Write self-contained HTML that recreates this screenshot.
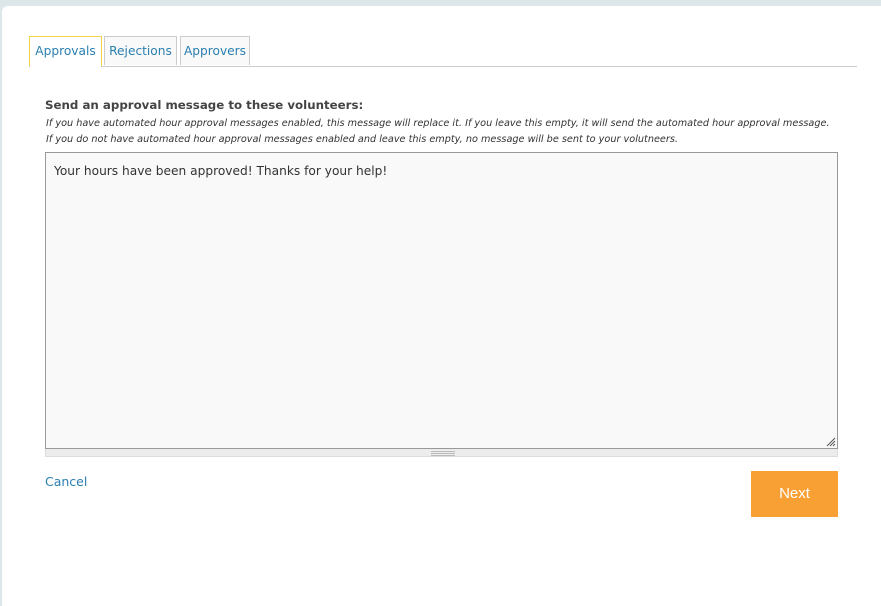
<!DOCTYPE html>
<html><head><style>
html,body{margin:0;padding:0;width:881px;height:573px;overflow:hidden;background:#dde7ea;}
.panel{position:absolute;left:2px;top:6px;width:900px;height:600px;background:#fff;border-radius:6px 0 0 0;}
.tab{position:absolute;top:36px;height:29px;border:1px solid #ccc;border-bottom:none;background:#f9f9f9;color:#2a7fb0;font:12.2px "DejaVu Sans",sans-serif;line-height:29px;text-align:center;box-sizing:border-box;}
.line{position:absolute;left:29px;top:66px;width:828px;height:1px;background:#ccc;}
h{position:absolute;left:45px;top:98px;font:bold 11.8px "DejaVu Sans",sans-serif;color:#444;white-space:nowrap;}
.it{position:absolute;left:46px;font:italic 9.7px "DejaVu Sans",sans-serif;color:#333;white-space:nowrap;}
.ta{position:absolute;left:45px;top:152px;width:793px;height:297px;box-sizing:border-box;border:1px solid #999;background:#f9f9f9;font:12.2px "DejaVu Sans",sans-serif;color:#333;padding:11px 8px;}
.grip{position:absolute;left:45px;top:449px;width:793px;height:8px;background:#ececec;border:1px solid #ddd;border-top:none;box-sizing:border-box;}
.next{position:absolute;left:751px;top:471px;width:87px;height:46px;background:#f9a035;color:#fff;font:15px "Liberation Sans",sans-serif;line-height:46px;text-align:center;}
.cancel{position:absolute;left:45px;top:474px;font:12.5px "DejaVu Sans",sans-serif;color:#2a7fb0;}
</style></head><body>
<div class="panel"></div>
<div class="tab" style="left:29px;width:73px;border-color:#f0d24c;background:#fff;height:31px;">Approvals</div>
<div class="tab" style="left:104px;width:73px;">Rejections</div>
<div class="tab" style="left:180px;width:70px;">Approvers</div>
<div class="line"></div>
<div style="position:absolute;left:30px;top:66px;width:71px;height:1px;background:#fff"></div>
<h>Send an approval message to these volunteers:</h>
<div class="it" style="top:118px">If you have automated hour approval messages enabled, this message will replace it. If you leave this empty, it will send the automated hour approval message.</div>
<div class="it" style="top:134px">If you do not have automated hour approval messages enabled and leave this empty, no message will be sent to your volutneers.</div>
<div class="ta">Your hours have been approved! Thanks for your help!</div>
<svg style="position:absolute;left:826px;top:437px" width="10" height="10"><path d="M1 9L9 1M4 9L9 4M7 9L9 7" stroke="#555" stroke-width="1"/></svg>
<div class="grip"><div style="position:absolute;left:385px;top:2px;width:24px;height:1px;background:#bbb;box-shadow:0 2px 0 #bbb,0 4px 0 #bbb"></div></div>
<div class="cancel">Cancel</div>
<div class="next">Next</div>
</body></html>
